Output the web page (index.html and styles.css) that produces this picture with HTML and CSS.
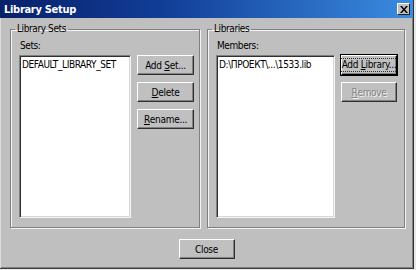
FILE: index.html
```html
<!DOCTYPE html>
<html>
<head>
<meta charset="utf-8">
<link rel="stylesheet" href="styles.css">
</head>
<body>
<div class="dialog">
  <div class="titlebar">
    <span class="title">Library Setup</span>
    <span class="xbtn"><svg width="8" height="7" viewBox="0 0 8 7"><path d="M0 0h2l2 2.5L6 0h2L5 3.5 8 7H6L4 4.5 2 7H0l3-3.5z" fill="#000"/></svg></span>
  </div>
  <div class="groups">
    <fieldset class="group group-left">
      <legend>Library Sets</legend>
      <div class="inner">
        <div class="label">Sets:</div>
        <div class="row">
          <div class="listbox lb-left"><div class="item">DEFAULT_LIBRARY_SET</div></div>
          <div class="buttons">
            <div class="btn">Add&nbsp;<u>S</u>et...</div>
            <div class="btn"><u>D</u>elete</div>
            <div class="btn"><u>R</u>ename...</div>
          </div>
        </div>
      </div>
    </fieldset>
    <fieldset class="group group-right">
      <legend>Libraries</legend>
      <div class="inner">
        <div class="label">Members:</div>
        <div class="row">
          <div class="listbox lb-right"><div class="item">D:\ПРОЕКТ\...\1533.lib</div></div>
          <div class="buttons">
            <div class="btn btn-default"><span class="focus">Add&nbsp;<u>L</u>ibrary...</span></div>
            <div class="btn btn-disabled"><u>R</u>emove</div>
          </div>
        </div>
      </div>
    </fieldset>
  </div>
  <div class="footer">
    <div class="btn btn-close">Close</div>
  </div>
</div>
</body>
</html>
```

FILE: styles.css
```css
html, body {
  margin: 0;
  padding: 0;
  background: #e8e8e8;
}
body {
  width: 416px;
  height: 270px;
  overflow: hidden;
  font-family: "DejaVu Sans Condensed", "Liberation Sans", sans-serif;
  font-size: 10px;
  letter-spacing: -0.4px;
  color: #000;
}
.dialog {
  box-sizing: border-box;
  width: 414px;
  height: 269px;
  background: #bfbfbf;
  border-right: 1px solid #303030;
  border-bottom: 1px solid #404040;
  box-shadow: inset 1px 1px 0 #dcdcdc, inset -1px -1px 0 #808080;
  display: flex;
  flex-direction: column;
}
.titlebar {
  height: 18px;
  background: linear-gradient(to right, #07206a 0%, #123e98 40%, #3a8ce0 100%);
  display: flex;
  align-items: center;
  justify-content: space-between;
  padding: 0 3px 0 4px;
}
.title {
  color: #fff;
  font-weight: bold;
  font-size: 11px;
  letter-spacing: -0.3px;
}
.xbtn {
  box-sizing: border-box;
  width: 13px;
  height: 12px;
  background: #c0c0c0;
  border-top: 1px solid #fff;
  border-left: 1px solid #fff;
  border-right: 1px solid #202020;
  border-bottom: 1px solid #202020;
  display: flex;
  align-items: center;
  justify-content: center;
}
.groups {
  display: flex;
  gap: 7px;
  padding-left: 10px;
  margin-top: 5px;
}
.group {
  box-sizing: border-box;
  margin: 0;
  height: 205px;
  border: 1px solid #808080;
  box-shadow: inset 1px 1px 0 #f4f4f4, 1px 1px 0 #f4f4f4;
  padding: 5px 0 0 0;
  min-width: 0;
}
.group-left { width: 190px; }
.group-right { width: 198px; }
legend {
  padding: 0 2px;
  margin-left: 4px;
  line-height: 12px;
}
.inner {
  padding-left: 8px;
}
.label {
  line-height: 12px;
  padding-left: 1px;
}
.row {
  display: flex;
  gap: 6px;
  margin-top: 3px;
}
.listbox {
  box-sizing: border-box;
  height: 163px;
  background: #fff;
  border-top: 1px solid #808080;
  border-left: 1px solid #808080;
  border-right: 1px solid #f4f4f4;
  border-bottom: 1px solid #f4f4f4;
  box-shadow: inset 1px 1px 0 #303030, inset -1px -1px 0 #d8d8d8;
  padding: 2px 2px;
}
.lb-left { width: 112px; }
.lb-right { width: 119px; }
.item {
  line-height: 13px;
  white-space: nowrap;
}
.buttons {
  display: flex;
  flex-direction: column;
  gap: 7px;
}
.btn {
  box-sizing: border-box;
  width: 57px;
  height: 20px;
  background: #c0c0c0;
  border-top: 1px solid #fff;
  border-left: 1px solid #fff;
  border-right: 1px solid #303030;
  border-bottom: 1px solid #303030;
  box-shadow: inset -1px -1px 0 #808080;
  display: flex;
  align-items: center;
  justify-content: center;
  white-space: nowrap;
  letter-spacing: -0.3px;
}
.btn-default {
  width: 56px;
  outline: 1px solid #000;
  outline-offset: 0;
  border-right-color: #000;
  border-bottom-color: #000;
}
.focus {
  outline: 1px dotted #303030;
  padding: 0 1px;
  line-height: 12px;
}
.btn-disabled {
  width: 56px;
  color: #868686;
  text-shadow: 1px 1px 0 #f4f4f4;
}
.footer {
  display: flex;
  justify-content: center;
  margin-top: 11px;
}
.btn-close {
  width: 56px;
}
```
